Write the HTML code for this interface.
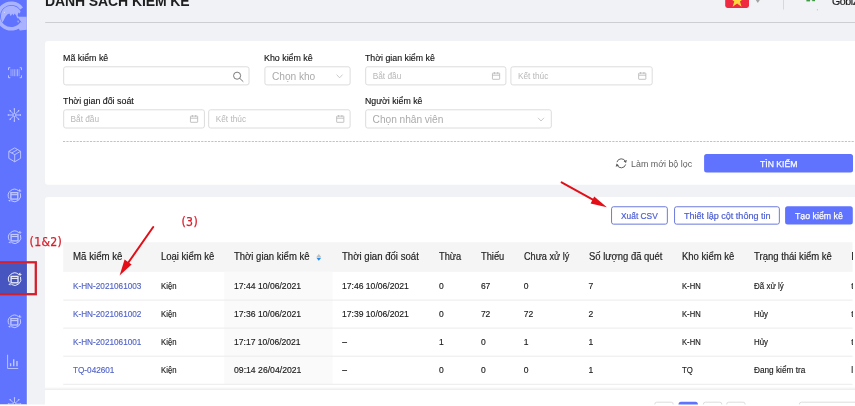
<!DOCTYPE html>
<html lang="vi">
<head>
<meta charset="utf-8">
<title>Danh sách kiểm kê</title>
<style>
*{box-sizing:border-box;margin:0;padding:0}
html,body{width:855px;height:406px;overflow:hidden;background:#f0f2f5}
#root{position:absolute;left:0;top:0;width:855px;height:406px;overflow:hidden;background:#f0f2f5;font-family:"Liberation Sans",sans-serif;color:#1c1c1c;will-change:transform}
svg{position:absolute;left:0;top:0}
.t{position:absolute;white-space:nowrap;line-height:12px;transform-origin:0 50%}
.title{font-size:14px;line-height:20px;font-weight:bold;color:#1f1f1f;letter-spacing:-0.1px}
.user{font-size:10.6px;line-height:14px;color:#1d1d1d;letter-spacing:-0.4px;-webkit-text-stroke:0.2px #1d1d1d}
.lbl{font-size:9.3px;color:#161616;-webkit-text-stroke:0.15px #161616}
.ph{font-size:8.3px;color:#b8b8b8;line-height:10px}
.sel{font-size:10.2px;color:#ababab;letter-spacing:-0.05px}
.btn{font-size:9.6px}
.btn.w{color:#fff;-webkit-text-stroke:0.25px #fff}
.btn.o{color:#4c5dd2;-webkit-text-stroke:0.2px #4c5dd2}
.th{font-size:10.1px;color:#222;-webkit-text-stroke:0.18px #222}
.td{font-size:8.5px;color:#1a1a1a;-webkit-text-stroke:0.15px #1a1a1a}
.td.lnk{color:#5364c9;-webkit-text-stroke:0.15px #5364c9}
.red{color:#d81e2a;font-family:"DejaVu Sans Condensed","DejaVu Sans",sans-serif;font-size:12.2px;line-height:14px;-webkit-text-stroke:0.25px #d81e2a}
</style>
</head>
<body>
<div id="root">
<svg width="855" height="406" viewBox="0 0 855 406">
<defs><clipPath id="sc"><rect x="0" y="0" width="26.8" height="404.5"/></clipPath></defs><rect x="0" y="0" width="26.8" height="404.5" fill="#5f73ff"/><rect x="26.1" y="0" width="0.7" height="404.5" fill="#5366ee"/><rect x="26.8" y="0" width="1.3" height="404.5" fill="#f9fafd"/><rect x="0" y="263.4" width="26.8" height="29.8" fill="#4655bf"/><g clip-path="url(#sc)"><g><path d="M21.60 8.45A12.85 12.85 0 1 0 21.98 23.00" fill="none" stroke="#aab3ff" stroke-width="3.50"/><path d="M17.3 16.8H27V29.7L19.8 30.5L18.6 28L22 24L20.9 21.6Z" fill="#aab3ff"/><path d="M1.3 13.2C2.6 8.4 6.6 5.7 11.2 5.7C15.4 5.7 19.3 8 20.6 11.6L19.6 13.6L18.4 12.6L17.6 15.2L18.6 17.4L17.4 18.4L16.2 15.4L14.6 13.6L13.6 15.6L12.2 13.8L10.8 16.2L9.4 13.6L7.6 14.2L5.6 16.6L3.6 20.5L2.4 22.6C1 20 0.6 16.4 1.3 13.2Z" fill="#aab3ff"/><path d="M17.6 20.2l1.6 0.8l-0.6 1.8l-1.4-0.8z" fill="#aab3ff" opacity="0.8"/><circle cx="4.4" cy="12.2" r="0.5" fill="#e8eaff"/></g><g fill="none" stroke="#fff" stroke-width="0.9" opacity="0.62"><path d="M10.3 67.7H8.5V70.10000000000001M8.5 75.3V77.7H10.3M19.7 67.7H21.5V70.10000000000001M21.5 75.3V77.7H19.7"/><line x1="11.00" y1="69.2" x2="11.00" y2="76.2" stroke-width="0.8" opacity="0.8"/><line x1="12.60" y1="69.2" x2="12.60" y2="76.2" stroke-width="0.6" opacity="0.8"/><line x1="14.20" y1="69.2" x2="14.20" y2="76.2" stroke-width="1.0" opacity="0.8"/><line x1="16.00" y1="69.2" x2="16.00" y2="76.2" stroke-width="0.6" opacity="0.8"/><line x1="17.60" y1="69.2" x2="17.60" y2="76.2" stroke-width="1.0" opacity="0.8"/><line x1="19.20" y1="69.2" x2="19.20" y2="76.2" stroke-width="0.6" opacity="0.8"/></g><g fill="none" stroke="#fff" stroke-width="0.9" opacity="0.62"><line x1="16.00" y1="115.00" x2="21.00" y2="115.00"/><circle cx="20.40" cy="115.00" r="0.75" fill="#fff" stroke="none"/><line x1="15.53" y1="116.13" x2="19.07" y2="119.67"/><circle cx="18.64" cy="119.24" r="0.75" fill="#fff" stroke="none"/><line x1="14.40" y1="116.60" x2="14.40" y2="121.60"/><circle cx="14.40" cy="121.00" r="0.75" fill="#fff" stroke="none"/><line x1="13.27" y1="116.13" x2="9.73" y2="119.67"/><circle cx="10.16" cy="119.24" r="0.75" fill="#fff" stroke="none"/><line x1="12.80" y1="115.00" x2="7.80" y2="115.00"/><circle cx="8.40" cy="115.00" r="0.75" fill="#fff" stroke="none"/><line x1="13.27" y1="113.87" x2="9.73" y2="110.33"/><circle cx="10.16" cy="110.76" r="0.75" fill="#fff" stroke="none"/><line x1="14.40" y1="113.40" x2="14.40" y2="108.40"/><circle cx="14.40" cy="109.00" r="0.75" fill="#fff" stroke="none"/><line x1="15.53" y1="113.87" x2="19.07" y2="110.33"/><circle cx="18.64" cy="110.76" r="0.75" fill="#fff" stroke="none"/><circle cx="14.4" cy="115" r="1.5"/></g><g fill="none" stroke="#fff" stroke-width="0.9" opacity="0.62" stroke-linejoin="round"><path d="M14.7 147.9L20.6 151.3V158.3L14.7 161.8L8.799999999999999 158.3V151.3Z"/><path d="M8.799999999999999 151.3L14.7 154.70000000000002L20.6 151.3M14.7 154.70000000000002V161.8M11.7 153.0L17.599999999999998 149.6"/></g><g fill="none" stroke="#fff" stroke-width="1" opacity="0.62"><path d="M20.25 193.18A6.2 6.2 0 0 1 11.21 200.76"/><path d="M9.13 198.60A6.2 6.2 0 0 1 18.65 190.89"/><rect x="10.90" y="192.70" width="6.9" height="6.4" stroke-width="1.3"/><line x1="10.90" y1="194.70" x2="17.80" y2="194.70" stroke-width="1.1"/><path d="M20.00 188.90l0.4 1.7l1.6 0.4l-1.7 0.5l-0.7 1.3l-0.2 -1.6l-1.3 -0.7z" fill="#fff" stroke="none"/><path d="M10.50 199.40l-0.3 2.4l-2.1 -1.3z" fill="#fff" stroke="none"/></g><g fill="none" stroke="#fff" stroke-width="1" opacity="0.62"><path d="M20.45 234.98A6.2 6.2 0 0 1 11.41 242.56"/><path d="M9.33 240.40A6.2 6.2 0 0 1 18.85 232.69"/><rect x="11.10" y="234.50" width="6.9" height="6.4" stroke-width="1.3"/><line x1="11.10" y1="236.50" x2="18.00" y2="236.50" stroke-width="1.1"/><path d="M20.20 230.70l0.4 1.7l1.6 0.4l-1.7 0.5l-0.7 1.3l-0.2 -1.6l-1.3 -0.7z" fill="#fff" stroke="none"/><path d="M10.70 241.20l-0.3 2.4l-2.1 -1.3z" fill="#fff" stroke="none"/></g><g fill="none" stroke="#fff" stroke-width="1" opacity="0.9"><path d="M20.45 276.88A6.2 6.2 0 0 1 11.41 284.46"/><path d="M9.33 282.30A6.2 6.2 0 0 1 18.85 274.59"/><rect x="11.10" y="276.40" width="6.9" height="6.4" stroke-width="1.3"/><line x1="11.10" y1="278.40" x2="18.00" y2="278.40" stroke-width="1.1"/><path d="M20.20 272.60l0.4 1.7l1.6 0.4l-1.7 0.5l-0.7 1.3l-0.2 -1.6l-1.3 -0.7z" fill="#fff" stroke="none"/><path d="M10.70 283.10l-0.3 2.4l-2.1 -1.3z" fill="#fff" stroke="none"/></g><g fill="none" stroke="#fff" stroke-width="1" opacity="0.62"><path d="M20.25 319.08A6.2 6.2 0 0 1 11.21 326.66"/><path d="M9.13 324.50A6.2 6.2 0 0 1 18.65 316.79"/><rect x="10.90" y="318.60" width="6.9" height="6.4" stroke-width="1.3"/><line x1="10.90" y1="320.60" x2="17.80" y2="320.60" stroke-width="1.1"/><path d="M20.00 314.80l0.4 1.7l1.6 0.4l-1.7 0.5l-0.7 1.3l-0.2 -1.6l-1.3 -0.7z" fill="#fff" stroke="none"/><path d="M10.50 325.30l-0.3 2.4l-2.1 -1.3z" fill="#fff" stroke="none"/></g><g fill="none" stroke="#fff" opacity="0.62"><path d="M7.6 354.7V368.5H18.2" stroke-width="0.9"/><line x1="10.6" y1="363.2" x2="10.6" y2="366.2" stroke-width="1.4"/><line x1="13.7" y1="359.2" x2="13.7" y2="366.2" stroke-width="1.4"/><line x1="17" y1="361" x2="17" y2="366.2" stroke-width="1.4"/></g><g fill="none" stroke="#fff" stroke-width="0.9" opacity="0.62"><line x1="16.10" y1="404.00" x2="21.10" y2="404.00"/><circle cx="20.50" cy="404.00" r="0.75" fill="#fff" stroke="none"/><line x1="15.63" y1="405.13" x2="19.17" y2="408.67"/><circle cx="18.74" cy="408.24" r="0.75" fill="#fff" stroke="none"/><line x1="14.50" y1="405.60" x2="14.50" y2="410.60"/><circle cx="14.50" cy="410.00" r="0.75" fill="#fff" stroke="none"/><line x1="13.37" y1="405.13" x2="9.83" y2="408.67"/><circle cx="10.26" cy="408.24" r="0.75" fill="#fff" stroke="none"/><line x1="12.90" y1="404.00" x2="7.90" y2="404.00"/><circle cx="8.50" cy="404.00" r="0.75" fill="#fff" stroke="none"/><line x1="13.37" y1="402.87" x2="9.83" y2="399.33"/><circle cx="10.26" cy="399.76" r="0.75" fill="#fff" stroke="none"/><line x1="14.50" y1="402.40" x2="14.50" y2="397.40"/><circle cx="14.50" cy="398.00" r="0.75" fill="#fff" stroke="none"/><line x1="15.63" y1="402.87" x2="19.17" y2="399.33"/><circle cx="18.74" cy="399.76" r="0.75" fill="#fff" stroke="none"/><circle cx="14.5" cy="404" r="1.5"/></g></g>
<rect x="45.2" y="22" width="810" height="1" fill="#cdced2"/><rect x="45" y="41" width="830" height="143.7" rx="3" fill="#fff"/><rect x="45" y="196.9" width="830" height="230" rx="3" fill="#fff"/><path d="M725.2 -2H749V5.6a2.3 2.3 0 0 1 -2.3 2.3H727.5a2.3 2.3 0 0 1 -2.3 -2.3Z" fill="#ee2b40"/><polygon transform="translate(737.1 0.2) scale(1.18)" points="0,-6.2 1.5,-1.7 6.2,-1.7 2.4,1.1 3.8,5.6 0,2.8 -3.8,5.6 -2.4,1.1 -6.2,-1.7 -1.5,-1.7" fill="#ffd83e"/><path d="M755 -1.2H760.6L757.8 3.1Z" fill="#a3a3a3"/><rect x="783.1" y="0" width="0.9" height="9.6" fill="#d4d5d8"/><rect x="806.4" y="-1" width="3.6" height="2.4" fill="#3f9a46"/><rect x="810" y="-1" width="2.2" height="1.8" fill="#dfe6e0"/><rect x="812.2" y="-1" width="2.8" height="2.2" fill="#3f9a46"/><rect x="816.9" y="9.3" width="1" height="1" fill="#b5b6ba"/><rect x="63.70" y="66.80" width="185.30" height="18.10" rx="2" fill="#fff" stroke="#dcdcdc" stroke-width="1"/><rect x="264.90" y="66.80" width="85.20" height="18.10" rx="2" fill="#fff" stroke="#dcdcdc" stroke-width="1"/><rect x="365.70" y="66.80" width="140.20" height="18.10" rx="2" fill="#fff" stroke="#dcdcdc" stroke-width="1"/><rect x="510.90" y="66.80" width="141.30" height="18.10" rx="2" fill="#fff" stroke="#dcdcdc" stroke-width="1"/><rect x="63.70" y="109.80" width="140.70" height="18.20" rx="2" fill="#fff" stroke="#dcdcdc" stroke-width="1"/><rect x="208.70" y="109.80" width="141.40" height="18.20" rx="2" fill="#fff" stroke="#dcdcdc" stroke-width="1"/><rect x="365.70" y="109.80" width="185.60" height="18.20" rx="2" fill="#fff" stroke="#dcdcdc" stroke-width="1"/><g fill="none" stroke="#6b6b6b" stroke-width="0.9"><circle cx="237.1" cy="75.7" r="3.55"/><line x1="239.7" y1="78.3" x2="243.3" y2="81.7"/></g><path d="M336.6 74.60000000000001L339.6 77.8L342.6 74.60000000000001" fill="none" stroke="#bdbdbd" stroke-width="0.8"/><g transform="translate(492 72.0)" fill="none" stroke="#b4b4b4" stroke-width="0.8"><rect x="0.45" y="1.1" width="7.2" height="6.2" rx="0.4"/><line x1="0.45" y1="3.2" x2="7.65" y2="3.2"/><line x1="2.4" y1="0" x2="2.4" y2="1.9"/><line x1="5.7" y1="0" x2="5.7" y2="1.9"/></g><g transform="translate(638.2 72.0)" fill="none" stroke="#b4b4b4" stroke-width="0.8"><rect x="0.45" y="1.1" width="7.2" height="6.2" rx="0.4"/><line x1="0.45" y1="3.2" x2="7.65" y2="3.2"/><line x1="2.4" y1="0" x2="2.4" y2="1.9"/><line x1="5.7" y1="0" x2="5.7" y2="1.9"/></g><g transform="translate(190 115.0)" fill="none" stroke="#b4b4b4" stroke-width="0.8"><rect x="0.45" y="1.1" width="7.2" height="6.2" rx="0.4"/><line x1="0.45" y1="3.2" x2="7.65" y2="3.2"/><line x1="2.4" y1="0" x2="2.4" y2="1.9"/><line x1="5.7" y1="0" x2="5.7" y2="1.9"/></g><g transform="translate(336.2 115.0)" fill="none" stroke="#b4b4b4" stroke-width="0.8"><rect x="0.45" y="1.1" width="7.2" height="6.2" rx="0.4"/><line x1="0.45" y1="3.2" x2="7.65" y2="3.2"/><line x1="2.4" y1="0" x2="2.4" y2="1.9"/><line x1="5.7" y1="0" x2="5.7" y2="1.9"/></g><path d="M538 117.80000000000001L541 121.0L544 117.80000000000001" fill="none" stroke="#bdbdbd" stroke-width="0.8"/><line x1="63" y1="141.5" x2="855" y2="141.5" stroke="#c2c2c2" stroke-width="1" stroke-dasharray="2.2 1.17"/><g fill="none" stroke="#595959" stroke-width="0.95"><path d="M616.95 162.14A4.5 4.5 0 0 1 625.53 161.76"/><path d="M625.65 164.46A4.5 4.5 0 0 1 617.07 164.84"/></g><path d="M626.9 159.9L626.0 163.0L623.6 161.2Z" fill="#595959"/><path d="M615.7 166.7L616.6 163.6L619.0 165.4Z" fill="#595959"/><rect x="704.1" y="154.1" width="148.9" height="18.3" rx="2.5" fill="#5f73ff"/><rect x="611.55" y="206.75" width="55.80" height="17.40" rx="2" fill="#fff" stroke="#5b6bd6" stroke-width="0.9"/><rect x="674.55" y="206.75" width="104.80" height="17.40" rx="2" fill="#fff" stroke="#5b6bd6" stroke-width="0.9"/><rect x="785.1" y="206.3" width="67.7" height="18.3" rx="2.5" fill="#5f73ff"/><rect x="63.2" y="242.2" width="789.4" height="29.7" fill="#f5f5f5"/><rect x="224.2" y="271.9" width="108.3" height="112.2" fill="#fafafa"/><rect x="63.2" y="299.6" width="789.4" height="1" fill="#ececec"/><rect x="63.2" y="327.6" width="789.4" height="1" fill="#ececec"/><rect x="63.2" y="355.7" width="789.4" height="1" fill="#ececec"/><rect x="63.2" y="383.8" width="789.4" height="1" fill="#ececec"/><path d="M316.4 256.9L318.8 254L321.2 256.9Z" fill="#bfbfbf"/><path d="M316.4 257.8L318.8 260.7L321.2 257.8Z" fill="#1b8cf5"/><defs><linearGradient id="sh" x1="0" y1="0" x2="0" y2="1"><stop offset="0" stop-color="#000" stop-opacity="0"/><stop offset="1" stop-color="#000" stop-opacity="0.075"/></linearGradient></defs><rect x="45" y="386.8" width="810" height="3.2" fill="url(#sh)"/><rect x="654.80" y="402.20" width="18.40" height="17.30" rx="2" fill="#fff" stroke="#dcdcdc" stroke-width="1"/><rect x="703.40" y="402.20" width="18.40" height="17.30" rx="2" fill="#fff" stroke="#dcdcdc" stroke-width="1"/><rect x="726.70" y="402.20" width="18.40" height="17.30" rx="2" fill="#fff" stroke="#dcdcdc" stroke-width="1"/><rect x="678.5" y="401.7" width="19.4" height="18" rx="2.5" fill="#5f73ff"/><rect x="799.40" y="402.20" width="80.10" height="17.30" rx="2" fill="#fff" stroke="#dcdcdc" stroke-width="1"/><rect x="-3" y="262.3" width="38.8" height="31.9" fill="none" stroke="#d3202c" stroke-width="2.3"/><g stroke="#e30f18" fill="#e30f18" stroke-linecap="round"><line x1="561.6" y1="182.4" x2="596" y2="201.3" stroke-width="2"/><polygon points="606.9,207.3 590.6,203.4 594.2,196.6" stroke="none"/><line x1="153.2" y1="227" x2="127" y2="264.5" stroke-width="2"/><polygon points="119.6,275.4 124.6,259.6 131.6,264.6" stroke="none"/></g><rect x="0" y="404.5" width="855" height="2" fill="#fff"/>
</svg>
<div class="t title" style="left:45px;top:-9.5px">DANH SÁCH KIỂM KÊ</div>
<div class="t user" style="left:832px;top:-6.4px">Gobiz</div>
<div class="t lbl" style="left:63.3px;top:51.5px;transform:scaleX(0.9531)">Mã kiểm kê</div>
<div class="t lbl" style="left:264.3px;top:51.5px;transform:scaleX(0.9520)">Kho kiểm kê</div>
<div class="t lbl" style="left:365.2px;top:51.5px;transform:scaleX(0.9458)">Thời gian kiểm kê</div>
<div class="t lbl" style="left:63.3px;top:95px;transform:scaleX(0.9525)">Thời gian đối soát</div>
<div class="t lbl" style="left:365.2px;top:95px;transform:scaleX(0.9427)">Người kiểm kê</div>
<div class="t ph" style="left:372.7px;top:71.0px">Bắt đầu</div>
<div class="t ph" style="left:517.9px;top:71.0px">Kết thúc</div>
<div class="t ph" style="left:70.5px;top:114.4px">Bắt đầu</div>
<div class="t ph" style="left:215.7px;top:114.4px">Kết thúc</div>
<div class="t sel" style="left:272px;top:70.6px">Chọn kho</div>
<div class="t sel" style="left:372.6px;top:113.7px">Chọn nhân viên</div>
<div class="t lbl" style="left:631.4px;top:157.6px;color:#5e5e5e;font-size:9.1px;-webkit-text-stroke:0;transform:scaleX(0.9764)">Làm mới bộ lọc</div>
<div class="t btn w" style="left:759.8px;top:158.1px;transform:scaleX(0.8995)">TÌN KIẾM</div>
<div class="t btn o" style="left:621px;top:209.6px;transform:scaleX(0.8733)">Xuất CSV</div>
<div class="t btn o" style="left:683.8px;top:209.6px;transform:scaleX(0.9440)">Thiết lập cột thông tin</div>
<div class="t btn w" style="left:795.1px;top:209.6px;transform:scaleX(0.9165)">Tạo kiểm kê</div>
<div class="t th" style="left:72.5px;top:250.8px;transform:scaleX(0.9591)">Mã kiểm kê</div>
<div class="t th" style="left:160.7px;top:250.8px;transform:scaleX(0.9405)">Loại kiểm kê</div>
<div class="t th" style="left:234.1px;top:250.8px;transform:scaleX(0.9425)">Thời gian kiểm kê</div>
<div class="t th" style="left:342.3px;top:250.8px;transform:scaleX(0.9518)">Thời gian đối soát</div>
<div class="t th" style="left:439.1px;top:250.8px;transform:scaleX(0.9190)">Thừa</div>
<div class="t th" style="left:480.9px;top:250.8px;transform:scaleX(0.9228)">Thiếu</div>
<div class="t th" style="left:523.7px;top:250.8px;transform:scaleX(0.9063)">Chưa xử lý</div>
<div class="t th" style="left:588.5px;top:250.8px;transform:scaleX(0.9352)">Số lượng đã quét</div>
<div class="t th" style="left:681.8px;top:250.8px;transform:scaleX(0.9415)">Kho kiểm kê</div>
<div class="t th" style="left:754.1px;top:250.8px;transform:scaleX(0.9425)">Trạng thái kiểm kê</div>
<div class="t th" style="left:851.2px;top:250.8px;width:1.4px;overflow:hidden">N</div>
<div class="t td lnk" style="left:72.5px;top:280.2px;transform:scaleX(0.9649)">K-HN-2021061003</div>
<div class="t td" style="left:160.7px;top:280.2px;transform:scaleX(0.9109)">Kiện</div>
<div class="t td" style="left:234.1px;top:280.2px;transform:scaleX(1.0123)">17:44 10/06/2021</div>
<div class="t td" style="left:342.3px;top:280.2px;transform:scaleX(1.0093)">17:46 10/06/2021</div>
<div class="t td" style="left:439.1px;top:280.2px">0</div>
<div class="t td" style="left:480.9px;top:280.2px">67</div>
<div class="t td" style="left:523.7px;top:280.2px">0</div>
<div class="t td" style="left:588.5px;top:280.2px">7</div>
<div class="t td" style="left:681.8px;top:280.2px;transform:scaleX(0.8998)">K-HN</div>
<div class="t td" style="left:754.1px;top:280.2px;transform:scaleX(0.9377)">Đã xử lý</div>
<div class="t td lnk" style="left:72.5px;top:308.2px;transform:scaleX(0.9649)">K-HN-2021061002</div>
<div class="t td" style="left:160.7px;top:308.2px;transform:scaleX(0.9109)">Kiện</div>
<div class="t td" style="left:234.1px;top:308.2px;transform:scaleX(1.0123)">17:36 10/06/2021</div>
<div class="t td" style="left:342.3px;top:308.2px;transform:scaleX(1.0093)">17:39 10/06/2021</div>
<div class="t td" style="left:439.1px;top:308.2px">0</div>
<div class="t td" style="left:480.9px;top:308.2px">72</div>
<div class="t td" style="left:523.7px;top:308.2px">72</div>
<div class="t td" style="left:588.5px;top:308.2px">2</div>
<div class="t td" style="left:681.8px;top:308.2px;transform:scaleX(0.8998)">K-HN</div>
<div class="t td" style="left:754.1px;top:308.2px;transform:scaleX(0.9256)">Hủy</div>
<div class="t td lnk" style="left:72.5px;top:336.2px;transform:scaleX(0.9649)">K-HN-2021061001</div>
<div class="t td" style="left:160.7px;top:336.2px;transform:scaleX(0.9109)">Kiện</div>
<div class="t td" style="left:234.1px;top:336.2px;transform:scaleX(1.0062)">17:17 10/06/2021</div>
<div class="t td" style="left:342.3px;top:336.2px">–</div>
<div class="t td" style="left:439.1px;top:336.2px">1</div>
<div class="t td" style="left:480.9px;top:336.2px">0</div>
<div class="t td" style="left:523.7px;top:336.2px">1</div>
<div class="t td" style="left:588.5px;top:336.2px">1</div>
<div class="t td" style="left:681.8px;top:336.2px;transform:scaleX(0.8998)">K-HN</div>
<div class="t td" style="left:754.1px;top:336.2px;transform:scaleX(0.9256)">Hủy</div>
<div class="t td lnk" style="left:72.5px;top:364.2px;transform:scaleX(0.9628)">TQ-042601</div>
<div class="t td" style="left:160.7px;top:364.2px;transform:scaleX(0.9109)">Kiện</div>
<div class="t td" style="left:234.1px;top:364.2px;transform:scaleX(1.0183)">09:14 26/04/2021</div>
<div class="t td" style="left:342.3px;top:364.2px">–</div>
<div class="t td" style="left:439.1px;top:364.2px">0</div>
<div class="t td" style="left:480.9px;top:364.2px">0</div>
<div class="t td" style="left:523.7px;top:364.2px">0</div>
<div class="t td" style="left:588.5px;top:364.2px">1</div>
<div class="t td" style="left:681.8px;top:364.2px;transform:scaleX(0.9143)">TQ</div>
<div class="t td" style="left:754.1px;top:364.2px;transform:scaleX(0.9694)">Đang kiểm tra</div>
<div class="t td" style="left:851.2px;top:280.2px;width:1.4px;overflow:hidden">t</div>
<div class="t td" style="left:851.2px;top:308.2px;width:1.4px;overflow:hidden">t</div>
<div class="t td" style="left:851.2px;top:336.2px;width:1.4px;overflow:hidden">t</div>
<div class="t td" style="left:851.2px;top:364.2px;width:1.4px;overflow:hidden">l</div>
<div class="t red" style="left:29.6px;top:234.7px;letter-spacing:0.3px">(1&amp;2)</div>
<div class="t red" style="left:181.4px;top:214.7px;letter-spacing:0.45px">(3)</div>
</div>
</body>
</html>
